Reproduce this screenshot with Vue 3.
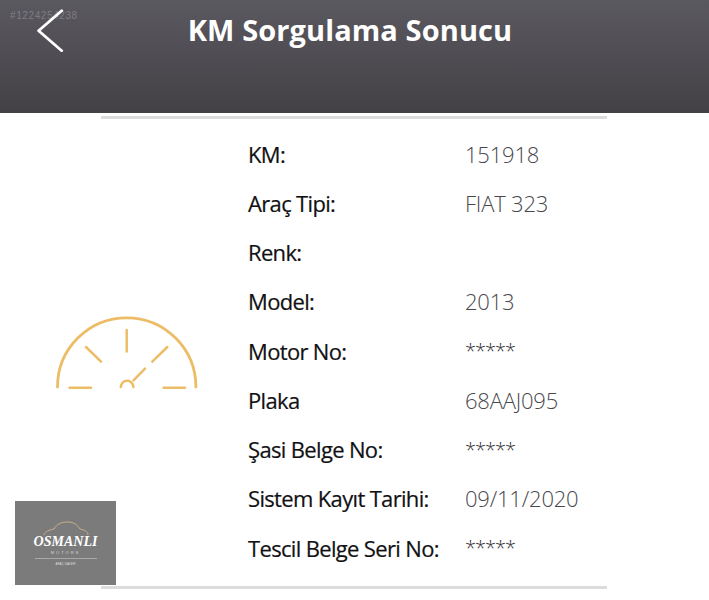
<template>
  <div class="page">
    <header class="top-bar">
      <svg class="back" width="30" height="46" viewBox="0 0 30 46">
        <path d="M25.7 4.7 L2.6 24.7 L25.7 44.7" fill="none" stroke="#fff" stroke-width="2.8" stroke-linecap="round" stroke-linejoin="round" />
      </svg>
      <h1 class="title">KM Sorgulama Sonucu</h1>
      <span class="ad-no">#1224254238</span>
    </header>

    <div class="rule rule-top"></div>

    <main class="content">
      <div class="gauge-col">
        <svg class="gauge" width="150" height="80" viewBox="50 312 150 80">
          <g fill="none" stroke="#ecbd66" stroke-width="2.5" stroke-linecap="round">
            <path d="M57.5 386 A69.2 69.2 0 0 1 195.9 386" stroke-width="2.8" />
            <path d="M126.7 329 V350.5" />
            <path d="M86 346 L101 360.7" />
            <path d="M167.3 346 L152.3 360.7" />
            <path d="M69.5 386.7 H91" />
            <path d="M163.5 386.7 H185" />
            <path d="M145 367.7 L133.5 379.3" />
            <path d="M120.8 386 A6.3 6.3 0 0 1 133.4 386" />
          </g>
        </svg>
      </div>

      <div class="rows">
        <div v-for="row in rows" :key="row.label" class="row">
          <span class="label">{{ row.label }}</span>
          <span class="value" :class="{ masked: row.value === '*****' }">{{ row.value }}</span>
        </div>
      </div>
    </main>

    <div class="rule rule-bottom"></div>

    <div class="dealer-logo">
      <svg class="car" width="48" height="15" viewBox="0 0 48 15">
        <path d="M2 14 C3 10 8 9 12 8 C15 3 19 1 26 1 C32 1 35 4 38 8 C42 9 46 10 46 14" fill="none" stroke="#c9b08c" stroke-width="1" />
      </svg>
      <div class="brand">OSMANLI</div>
      <div class="brand-sub">MOTORS</div>
      <div class="brand-line"><span>ARAÇ GALERİ</span></div>
    </div>
  </div>
</template>

<script setup>
const rows = [
  { label: 'KM:', value: '151918' },
  { label: 'Araç Tipi:', value: 'FIAT 323' },
  { label: 'Renk:', value: '' },
  { label: 'Model:', value: '2013' },
  { label: 'Motor No:', value: '*****' },
  { label: 'Plaka', value: '68AAJ095' },
  { label: 'Şasi Belge No:', value: '*****' },
  { label: 'Sistem Kayıt Tarihi:', value: '09/11/2020' },
  { label: 'Tescil Belge Seri No:', value: '*****' }
]
</script>

<style>
html,
body {
  background: #fff;
}
</style>

<style scoped>
.page {
  position: relative;
  width: 709px;
  height: 600px;
  overflow: hidden;
  background: #fff;
  font-family: "Open Sans", "Noto Sans", sans-serif;
}

.top-bar {
  position: relative;
  height: 113px;
  display: flex;
  justify-content: center;
  padding: 10px 9px 0 0;
  box-sizing: border-box;
  background: linear-gradient(#5b5960, #434145);
}

.back {
  position: absolute;
  top: 6px;
  left: 36px;
}

.title {
  margin: 0;
  font-size: 29px;
  line-height: 40px;
  font-weight: 700;
  letter-spacing: 0.1px;
  color: #fff;
}

.ad-no {
  position: absolute;
  top: 10px;
  left: 10px;
  font-family: "Liberation Sans", sans-serif;
  font-size: 10px;
  letter-spacing: 0.6px;
  color: rgba(255, 255, 255, 0.24);
}

.rule {
  width: 506px;
  height: 3px;
  margin-left: 101px;
  background: #dcdcdc;
}

.rule-top {
  margin-top: 3px;
}

.content {
  display: flex;
  height: 467px;
}

.gauge-col {
  width: 147px;
  margin-left: 50px;
  margin-right: 51px;
  padding-top: 194px;
  box-sizing: border-box;
}

.gauge {
  display: block;
}

.rows {
  padding-top: 10px;
}

.row {
  display: flex;
  align-items: center;
  height: 49.25px;
  font-size: 22px;
}

.label {
  width: 217px;
  flex: none;
  color: #111113;
  letter-spacing: -0.66px;
  -webkit-text-stroke: 0.2px #111113;
}

.value {
  color: #48484c;
  font-weight: 300;
  letter-spacing: -0.2px;
}

.value.masked {
  font-size: 20px;
  letter-spacing: -1px;
  color: #333336;
}

.dealer-logo {
  position: absolute;
  left: 15px;
  top: 501px;
  width: 101px;
  height: 84px;
  background: #7b7b7b;
  display: flex;
  flex-direction: column;
  align-items: center;
  padding-top: 20px;
  box-sizing: border-box;
}

.car {
  display: block;
  margin-bottom: -2px;
}

.brand {
  font-family: "Liberation Serif", serif;
  font-style: italic;
  font-weight: 700;
  font-size: 14px;
  line-height: 15px;
  color: #fff;
}

.brand-sub {
  font-family: "Liberation Sans", sans-serif;
  font-size: 4px;
  line-height: 7px;
  letter-spacing: 2px;
  color: #d8d8d8;
}

.brand-line {
  width: 62px;
  margin-top: 2px;
  border-top: 1px solid #a8a8a8;
  text-align: center;
  line-height: 0;
}

.brand-line span {
  font-family: "Liberation Sans", sans-serif;
  font-size: 3px;
  padding: 0 2px;
  background: #7b7b7b;
  color: #ddd;
}
</style>
